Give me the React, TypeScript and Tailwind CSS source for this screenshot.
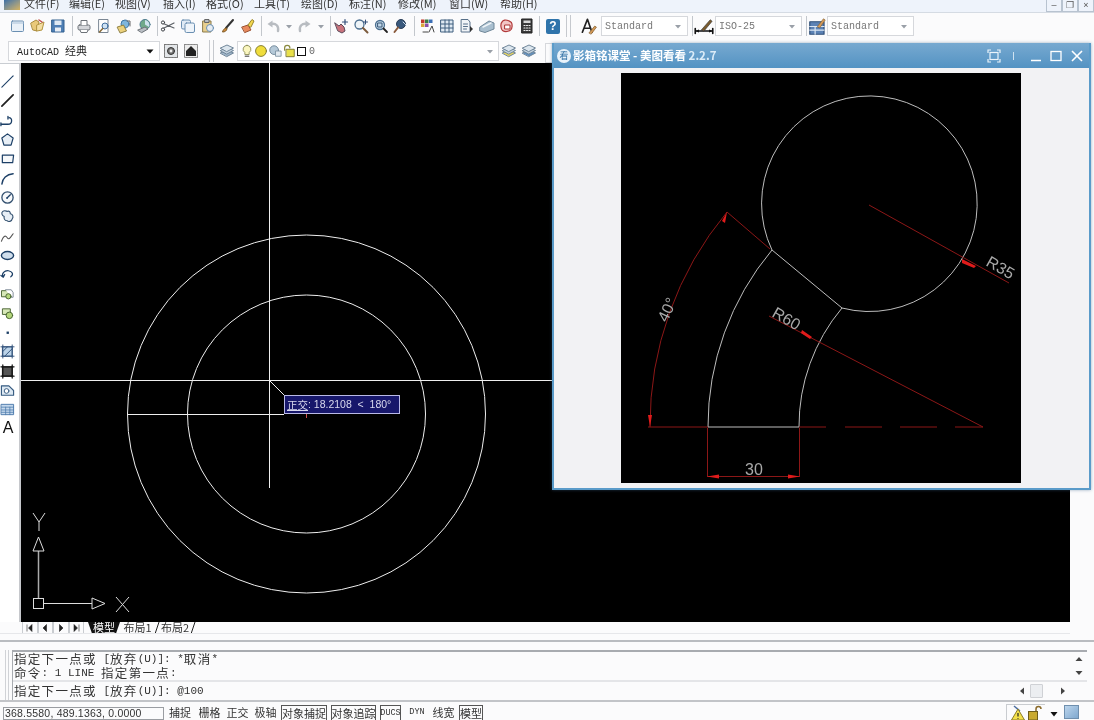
import type { ReactNode } from "react";

const cjk = "font-['Noto_Sans_CJK_SC','Noto_Sans',sans-serif]";
const mono = "font-['Liberation_Mono','Noto_Sans_CJK_SC',monospace]";

const menus = [
  { t: "文件(F)", w: 45 },
  { t: "编辑(E)", w: 46 },
  { t: "视图(V)", w: 48 },
  { t: "插入(I)", w: 43 },
  { t: "格式(O)", w: 48 },
  { t: "工具(T)", w: 47 },
  { t: "绘图(D)", w: 48 },
  { t: "标注(N)", w: 49 },
  { t: "修改(M)", w: 51 },
  { t: "窗口(W)", w: 51 },
  { t: "帮助(H)", w: 40 },
];

function Ic({ children, size = 16 }: { children: ReactNode; size?: number }) {
  return (
    <svg viewBox="0 0 16 16" width={size} height={size} fill="none" strokeLinecap="round" strokeLinejoin="round">
      {children}
    </svg>
  );
}

function Slot({ children, w = 20 }: { children?: ReactNode; w?: number }) {
  return <div className="flex h-full shrink-0 items-center justify-center" style={{ width: w }}>{children}</div>;
}

function Sep({ ml = 3 }: { ml?: number }) {
  return <div className="h-[20px] w-[1px] shrink-0 bg-[#c3c7cc]" style={{ marginLeft: ml }} />;
}

function Grip() {
  return <div className="h-[22px] w-[5px] shrink-0 border-x border-[#c6c9ce]" />;
}

function Drop() {
  return (
    <svg viewBox="0 0 8 8" width="8" height="8" className="shrink-0">
      <path d="M1 3h6L4 6.5z" fill="#9aa0a8" />
    </svg>
  );
}

function Combo({ w, children, dark }: { w: number; children: ReactNode; dark?: boolean }) {
  return (
    <div className="flex h-[20px] shrink-0 items-center justify-between border border-[#d6d8dc] bg-white pl-[3px] pr-[5px]" style={{ width: w }}>
      <div className={`${mono} flex items-center text-[10px] text-[#777]`}>{children}</div>
      {dark ? (
        <svg viewBox="0 0 8 8" width="8" height="8"><path d="M0.5 2.5h7L4 6.5z" fill="#111" /></svg>
      ) : (
        <Drop />
      )}
    </div>
  );
}

/* top toolbar drawings */
const New = () => <Ic><rect x="1.5" y="3" width="12" height="10.5" rx="1" fill="#eaf1f8" stroke="#6a8fb2" /><path d="M1.5 5h12" stroke="#a9c1d8" /></Ic>;
const Open = () => <Ic><path d="M1 5l5-3 3 2-2 9-4-1z" fill="#e9c97a" stroke="#a98a3c" /><path d="M7 7l7-3-2 8-5 1z" fill="#f3dda0" stroke="#b2933f" /><path d="M9 2l3 2" stroke="#c0504d" strokeWidth="1.5" /></Ic>;
const Save = () => <Ic><rect x="2" y="2" width="12" height="12" fill="#4f7fb5" stroke="#33608f" /><rect x="4.5" y="2.5" width="7" height="4.5" fill="#dfe9f3" /><rect x="5" y="9.5" width="6" height="4" fill="#e9eef4" /></Ic>;
const Print = () => <Ic><rect x="2" y="7" width="12" height="5" rx="1.5" fill="#d4d6da" stroke="#6d7278" /><path d="M5 7V2.5h6V7" fill="#fff" stroke="#6d7278" /><path d="M4 12l1 2.5h6l1-2.5" fill="#fff" stroke="#6d7278" /></Ic>;
const Preview = () => <Ic><path d="M3 1.5h9v13H3z" fill="#fff" stroke="#7b8794" /><circle cx="9" cy="8" r="3" fill="#cfe2f3" stroke="#3e6d9e" /><path d="M6.8 10.5L3.5 14" stroke="#8a6d3b" strokeWidth="1.6" /></Ic>;
const Publish = () => <Ic><circle cx="9" cy="6" r="4" fill="#7fb6dd" stroke="#3f75a4" /><path d="M1.5 9l6-2 3 6-6 2z" fill="#ecd17c" stroke="#8f7f3e" /><path d="M11 3h3v5" stroke="#666" /></Ic>;
const Plot = () => <Ic><circle cx="9" cy="6.5" r="5" fill="#6fa98a" stroke="#4c7a8f" /><path d="M9 2a5 5 0 0 1 4 7l-4-2.5z" fill="#cfe3ef" /><path d="M2 12l7-3 3 2-6 3.5z" fill="#b9bec4" stroke="#6c7278" /></Ic>;
const Cut = () => <Ic><path d="M2 5l12 5M2 11l12-6" stroke="#5c6066" strokeWidth="1.2" /><circle cx="3" cy="4.5" r="1.6" fill="#fff" stroke="#3c4046" /><circle cx="3" cy="11.5" r="1.6" fill="#fff" stroke="#3c4046" /></Ic>;
const Copy = () => <Ic><rect x="1.5" y="2" width="9" height="9" rx="1.5" fill="#dfeaf5" stroke="#6a8fb2" /><rect x="5" y="5" width="9.5" height="9.5" rx="1.5" fill="#eef4fa" stroke="#6a8fb2" /></Ic>;
const Paste = () => <Ic><path d="M3 3h8v11H3z" fill="#e8cf8e" stroke="#8a7a4a" /><rect x="5" y="1.5" width="4" height="3" fill="#b9bec4" stroke="#666" /><circle cx="10" cy="10" r="3.5" fill="#e7edf3" stroke="#6a8fb2" /></Ic>;
const Brush = () => <Ic><path d="M13 2L6 10" stroke="#333" strokeWidth="2" /><path d="M6 10c-2 .5-3 2-3.5 4 2.5 0 4-1 4.5-3z" fill="#d08a3a" stroke="#7d5a26" /></Ic>;
const Match = () => <Ic><path d="M2 9l6-2 3 5-6 2.5z" fill="#e98a5c" stroke="#9b5132" /><path d="M8 7l4-5.5 2 1.5-3 6z" fill="#f4d84f" stroke="#99852b" /></Ic>;
const Undo = () => <Ic><path d="M13 13c1-5-2-8-7-7" stroke="#b8bcc1" strokeWidth="2.4" /><path d="M7.5 2.5L2.5 6l5 3.5z" fill="#b8bcc1" /></Ic>;
const Redo = () => <Ic><path d="M3 13c-1-5 2-8 7-7" stroke="#b8bcc1" strokeWidth="2.4" /><path d="M8.5 2.5l5 3.5-5 3.5z" fill="#b8bcc1" /></Ic>;
const Pan = () => <Ic><path d="M2 5l4 3 2-2 3 3 1 4-3 2-4-2z" fill="#c9737c" stroke="#5b4a5a" /><path d="M12 1.5v5M9.5 4h5" stroke="#34507a" strokeWidth="1.2" /></Ic>;
const ZoomA = () => <Ic><circle cx="6.5" cy="6.5" r="4.5" fill="#eef4f8" stroke="#4c6f90" strokeWidth="1.3" /><path d="M10 10l4.5 4.5" stroke="#7b5a3c" strokeWidth="2" /><path d="M12.5 2v4M10.5 4h4" stroke="#34507a" /></Ic>;
const ZoomB = () => <Ic><circle cx="7" cy="7" r="4.5" fill="#c3d9ea" stroke="#4c6f90" strokeWidth="1.3" /><rect x="5" y="5" width="4" height="4" stroke="#3a5675" /><path d="M10.5 10.5l3.5 3.5" stroke="#222" strokeWidth="1.8" /></Ic>;
const ZoomC = () => <Ic><circle cx="8" cy="6" r="4.5" fill="#39597d" stroke="#2b3f59" /><path d="M5 9.5L1.5 14" stroke="#8a5a3c" strokeWidth="2" /><path d="M10 4l3 3" stroke="#cfe0ee" /></Ic>;
const Props = () => <Ic><rect x="2" y="1.5" width="3.5" height="3.5" fill="#c0392b" /><rect x="6" y="1.5" width="3.5" height="3.5" fill="#3a7d44" /><rect x="10" y="1.5" width="3.5" height="3.5" fill="#3c6fb5" /><rect x="2" y="5.5" width="3.5" height="3.5" fill="#d9a63c" /><rect x="6" y="5.5" width="3.5" height="3.5" fill="#8a4fa8" /><path d="M10 14l3-6 2 6M4 14h5" stroke="#444" /></Ic>;
const Grid = () => <Ic><rect x="2" y="2" width="12" height="12" fill="#dfe9f2" stroke="#3f5f7f" /><path d="M6 2v12M10 2v12M2 6h12M2 10h12" stroke="#3f5f7f" /></Ic>;
const Doc = () => <Ic><path d="M2.5 1.5H9l2 2.5v10H2.5z" fill="#f1f4f7" stroke="#576f88" /><path d="M4.5 6h4M4.5 8.5h4M4.5 11h3" stroke="#576f88" /><path d="M11 8l3 3-3 3z" fill="#333" /></Ic>;
const Sheet = () => <Ic><path d="M1 9l9-6 5 2v6l-9 3.5L1 13z" fill="#a9bfcf" stroke="#6f8798" /><path d="M4 9l8-4" stroke="#eef3f7" strokeWidth="1.5" /></Ic>;
const Cloud = () => <Ic><path d="M3 4c1-2 4-2.5 6-1.5s4 1 4 3.5 1 5-2 6.5-6 1-7.5 0S1 6 3 4z" fill="#f2c6c6" stroke="#b23a3a" strokeWidth="1.2" /><path d="M6 7h5v4H6z" fill="#fff" stroke="#a33" /></Ic>;
const Calc = () => <Ic><rect x="3" y="1" width="10" height="14" fill="#3b3b3b" stroke="#222" /><rect x="4.5" y="2.5" width="7" height="2.5" fill="#d8d8d8" /><path d="M5 7.5h1M7.5 7.5h1M10 7.5h1M5 10h1M7.5 10h1M10 10h1M5 12.5h1M7.5 12.5h1M10 12.5h1" stroke="#eee" strokeWidth="1.2" /></Ic>;
const Help = () => (
  <div className="flex h-[15px] w-[14px] items-center justify-center rounded-[2px] bg-[#2f74ab] text-[12px] font-bold leading-none text-white font-['Liberation_Sans',sans-serif]">?</div>
);
const TextStyle = () => <Ic size={18}><path d="M3 13.5L7.5 2l4 11.5M4.5 10h6" stroke="#222" strokeWidth="1.5" /><path d="M9 14l5-6 1.5 1-4.5 6z" fill="#d49a5a" stroke="#7d5a26" strokeWidth=".6" /></Ic>;
const DimStyle = () => <Ic size={20}><path d="M1 12h14M1 10v4M15 10v4" stroke="#111" strokeWidth="1.3" /><path d="M1 12l3-1.2v2.4zM15 12l-3-1.2v2.4z" fill="#111" /><path d="M6 11l7-8 1.5 1.2L8 12z" fill="#7a5a2c" stroke="#333" strokeWidth=".5" /></Ic>;
const TableStyle = () => <Ic size={19}><rect x="1.5" y="4" width="12" height="10.5" fill="#5c82b5" stroke="#2f4f78" /><path d="M1.5 8h12M1.5 11h12M6 8v6.5" stroke="#dce7f3" /><path d="M8 8l5-6.5 1.5 1L10 9z" fill="#d49a5a" stroke="#7d5a26" strokeWidth=".5" /></Ic>;

/* second toolbar drawings */
const Gear = () => <Ic><rect x="1.5" y="1.5" width="13" height="13" fill="#e3e6e9" stroke="#777" strokeDasharray="2 1" /><circle cx="8" cy="8" r="3.5" fill="#777" stroke="#333" /><circle cx="8" cy="8" r="1.4" fill="#eee" /></Ic>;
const Block = () => <Ic><rect x="1.5" y="1.5" width="13" height="13" fill="#ececec" stroke="#888" strokeDasharray="2 1" /><path d="M3 8l5-5 5 5v5H3z" fill="#222" /></Ic>;
const Layers = ({ tint = "#9db4c9" }: { tint?: string }) => <Ic><path d="M1.5 10L8 7l6.5 3L8 13.5z" fill={tint} stroke="#71879a" /><path d="M1.5 7.5L8 4.5l6.5 3L8 11z" fill="#c3d2df" stroke="#71879a" /><path d="M1.5 5L8 2l6.5 3L8 8.5z" fill="#dce6ee" stroke="#71879a" /></Ic>;
const Bulb = () => <Ic size={14}><path d="M8 1.5a4.5 4.5 0 0 0-2.5 8.2V12h5V9.7A4.5 4.5 0 0 0 8 1.5z" fill="#fbf7c0" stroke="#8a8a55" /><path d="M6 14h4" stroke="#777" strokeWidth="1.5" /></Ic>;
const Sun = () => <Ic size={14}><circle cx="8" cy="8" r="6.2" fill="#f0dd3c" stroke="#77722a" /></Ic>;
const Frozen = () => <Ic size={14}><circle cx="7" cy="7" r="5" fill="#b5c9d8" stroke="#6c8294" /><rect x="9" y="8" width="6" height="6" fill="#e2eaf0" stroke="#7f93a3" /></Ic>;
const Lock = () => <Ic size={14}><path d="M3 7V4.5a3 3 0 0 1 6 0" stroke="#8a8a40" strokeWidth="1.4" /><rect x="5" y="6" width="9" height="8.5" fill="#e9e04a" stroke="#77722a" /></Ic>;

/* left toolbar drawings */
const s = "#1c3f66";
const leftTools: ReactNode[] = [
  <path d="M2 14L14 2" stroke={s} strokeWidth="1.2" />,
  <path d="M2 14L14 2" stroke="#222" strokeWidth="1.8" />,
  <><path d="M1.5 12h7c5 0 5-7 1-7" stroke={s} strokeWidth="1.4" /><path d="M1 10.5v3M8.5 3.5v3" stroke={s} strokeWidth="1.4" /></>,
  <path d="M8 2l6 4.5-2.2 7.5H4.2L2 6.5z" fill="#e8eff6" stroke={s} strokeWidth="1.3" />,
  <path d="M2.5 4.5h12l-1 8h-11z" fill="#f7f9fb" stroke={s} strokeWidth="1.3" />,
  <path d="M2 14C2.5 8 7 3.5 14 3" stroke={s} strokeWidth="1.5" />,
  <><circle cx="8" cy="8" r="6" fill="#f7f9fb" stroke="#33506f" strokeWidth="1.4" /><path d="M8 8l3-3" stroke={s} strokeWidth="1.4" /><circle cx="7.5" cy="8.5" r="1" fill={s} /></>,
  <path d="M3 2.5c2-1.5 4 0 5 0 2-1 3 1 3 2.5 3 .5 3.5 4 2 5.5-.5 3-4 3.5-5.5 2-3 0-3.5-3-3-4.5C2 7 1 4 3 2.5z" fill="#e8eff6" stroke="#33506f" strokeWidth="1.2" />,
  <path d="M1.5 13c2-5 4-7 6-4s3 1 6.5-4" stroke="#555" strokeWidth="1.1" />,
  <ellipse cx="8" cy="8" rx="6.5" ry="4.2" fill="#cfdeec" stroke={s} strokeWidth="1.5" />,
  <path d="M3.5 10.5C1 7 5 3.5 9 4c4 .5 6 4 2.5 6.5M5 8l-1.5 3L1 9" stroke={s} strokeWidth="1.3" />,
  <><rect x="2" y="5" width="9" height="6.5" fill="#d7e8b8" stroke="#44602f" /><path d="M6 4h6l2 3v5h-2" fill="#fff" stroke="#7b8794" /><circle cx="9" cy="11" r="2.8" fill="#b5d77d" stroke="#44602f" /></>,
  <><rect x="3" y="3" width="8" height="6" fill="#d7e8b8" stroke="#44602f" /><circle cx="10" cy="10" r="3.5" fill="#b5d77d" stroke="#44602f" /></>,
  <rect x="7" y="7" width="2.5" height="2.5" fill={s} />,
  <><rect x="3" y="3" width="10" height="10" fill="#bcd3e8" stroke="#2f4f78" /><path d="M1 3h14M1 13h14M3 1v14M13 1v14M3 8l5-5M5 13l8-8" stroke="#2f4f78" /></>,
  <><rect x="3" y="3" width="10" height="10" fill="#555" stroke="#111" /><path d="M1 3h14M1 13h14M3 1v14M13 1v14" stroke="#111" strokeWidth="1.3" /></>,
  <><path d="M1.5 3h8l5 5v5h-13z" fill="#dce8f2" stroke="#355a80" strokeWidth="1.2" /><circle cx="7" cy="8.5" r="2.5" fill="#fff" stroke="#355a80" /></>,
  <><rect x="1.5" y="2.5" width="13" height="11" fill="#c5d8ec" stroke="#4b79ab" /><path d="M1.5 5.5h13M1.5 8.5h13M1.5 11h13M6 5.5v8M10.5 5.5v8" stroke="#4b79ab" strokeWidth=".8" /></>,
];

function CadDrawing() {
  return (
    <svg viewBox="21 63 1049 559" className="block h-full w-full" fill="none">
      <g stroke="#eeeeee" strokeWidth="1">
        <circle cx="306.5" cy="414" r="179" />
        <circle cx="306.5" cy="414" r="119" />
        <path d="M269.5 63V488M21 380.5H552M127 414.5H284M270 381L285 396" />
      </g>
      <path d="M306.5 412v6" stroke="#d05050" />
      {/* ucs icon */}
      <g stroke="#ddd" strokeWidth="1">
        <rect x="33.5" y="598.5" width="10" height="10" />
        <path d="M38.5 598V551" stroke="#aaa" strokeWidth="1.5" />
        <path d="M43 603.5H92" />
        <path d="M38.5 537l-5.5 14h11zM92 598v11l13-5.5z" />
        <path d="M33 513l6 9 6-9M39 522v9M116 597l13 15M129 597l-13 15" />
      </g>
    </svg>
  );
}

function ReferenceDrawing() {
  const red = "#8c1717";
  const text = "font-['Liberation_Sans',sans-serif]";
  return (
    <svg viewBox="621 73 400 410" className="block h-[410px] w-[400px]" fill="none">
      <g stroke="#bdbdbd" strokeWidth="1">
        <path d="M772 250A107.8 107.8 0 1 1 842 308" />
        <path d="M708 427A275 275 0 0 1 772 250L842 308A184 184 0 0 0 799 427Z" />
      </g>
      <g stroke={red} strokeWidth="1">
        <path d="M650 427A333 333 0 0 1 727 212L770 249" />
        <path d="M869 205L1009 283M769 316L983 427" />
        <path d="M648 427H708M799 427H826M845 427H882M900 427H937M955 427H983" />
        <path d="M707.5 428V477M799.5 428V477M707 476.5H800" />
      </g>
      <g fill="#e01b1b">
        <path d="M650 427l-2-12h4zM727 212l-5 9 3 2zM962 259l14 7-2 2-12-5zM810 339l-9-6 1-3 10 7zM707 476.5l12-2v4zM800 476.5l-12-2v4z" />
      </g>
      <g fill="#a8a8a8" className={text} fontSize="16">
        <text x="745" y="475">30</text>
        <text x="0" y="0" transform="translate(985 265) rotate(30)">R35</text>
        <text x="0" y="0" transform="translate(771 316) rotate(30)">R60</text>
        <text x="0" y="0" transform="translate(667 323) rotate(-65)">40°</text>
      </g>
    </svg>
  );
}

function ViewerWindow() {
  return (
    <div className="absolute left-[552px] top-[43px] flex h-[447px] w-[539px] flex-col border-x-2 border-b-2 border-[#5a9bc9] bg-[#f2f2f4] shadow-[0_0_3px_rgba(60,100,140,0.5)]">
      <div className="flex h-[25px] shrink-0 items-center bg-gradient-to-b from-[#77a9d0] to-[#5393c3] pl-[3px] pr-[5px]">
        <div className="flex h-[14px] w-[14px] items-center justify-center rounded-full bg-[#e9f3fb] text-[9px] leading-none text-[#2c6ea3]">
          <span className={cjk}>看</span>
        </div>
        <span className={`${cjk} ml-[2px] text-[11.5px] font-bold text-white`}>影箱铭课堂 - 美图看看 <span className="text-[#dcecf8]">2.2.7</span></span>
        <div className="ml-auto flex items-center">
          <svg viewBox="0 0 14 14" width="14" height="14" fill="none" stroke="#eaf3fa" strokeWidth="1.2">
            <path d="M1 4V1h3M10 1h3v3M13 10v3h-3M4 13H1v-3" />
            <rect x="3" y="3.5" width="8" height="7" />
          </svg>
          <div className="ml-[12px] h-[8px] w-[1px] bg-[#cfe2f0]" />
          <svg viewBox="0 0 14 14" width="14" height="14" fill="none" stroke="#fff" strokeWidth="1.5" className="ml-[15px]"><path d="M2 11.5h10" /></svg>
          <svg viewBox="0 0 14 14" width="14" height="14" fill="none" stroke="#fff" strokeWidth="1.3" className="ml-[6px]"><rect x="2" y="2.5" width="10" height="9" /></svg>
          <svg viewBox="0 0 14 14" width="14" height="14" fill="none" stroke="#fff" strokeWidth="1.6" className="ml-[7px]"><path d="M2 2l10 10M12 2L2 12" /></svg>
        </div>
      </div>
      <div className="flex pl-[67px] pt-[5px]">
        <div className="bg-black">
          <ReferenceDrawing />
        </div>
      </div>
    </div>
  );
}

function Cmd({ children }: { children: ReactNode }) {
  return <span className={`${cjk} text-[12.5px] tracking-[1.3px]`}>{children}</span>;
}

function Lat({ children }: { children: ReactNode }) {
  return <span className={`${mono} text-[11px]`}>{children}</span>;
}

function Slash() {
  return (
    <svg viewBox="0 0 6 12" width="6" height="12" fill="none" className="shrink-0">
      <path d="M5 0L1 12" stroke="#222" />
    </svg>
  );
}

const statusBtns = [
  { t: "捕捉", w: 22, ml: 5 },
  { t: "栅格", w: 23, ml: 7 },
  { t: "正交", w: 23, ml: 5 },
  { t: "极轴", w: 23, ml: 5 },
  { t: "对象捕捉", w: 46, ml: 4, on: true },
  { t: "对象追踪", w: 45, ml: 4, on: true },
  { t: "DUCS", w: 21, ml: 4, on: true, lat: true },
  { t: "DYN", w: 20, ml: 6, lat: true },
  { t: "线宽", w: 23, ml: 5 },
  { t: "模型", w: 24, ml: 4, on: true },
];

export default function App() {
  return (
    <div className="relative flex h-[720px] w-[1094px] flex-col overflow-hidden bg-[#fbfbfc] text-[#222] blur-[0.3px] font-['Liberation_Sans',sans-serif]">
      {/* menu bar */}
      <div className="flex h-[13px] shrink-0 overflow-hidden border-b border-[#d5dbe3] bg-[#eef3fb]">
        <div className="ml-[4px] h-[10px] w-[16px] shrink-0 bg-gradient-to-br from-[#3c6fa5] to-[#d8b45a]" />
        <div className={`${cjk} -mt-[5px] ml-[4px] flex text-[11px] leading-[16px] text-[#333]`}>
          {menus.map((m) => <span key={m.t} className="whitespace-nowrap" style={{ width: m.w }}>{m.t}</span>)}
        </div>
        <div className="ml-auto flex h-[12px] items-start">
          {["–", "❐", "×"].map((c) => (
            <div key={c} className="flex h-[12px] w-[16px] items-center justify-center border-x border-b border-[#b8c3d0] text-[9px] leading-none text-[#555]">{c}</div>
          ))}
        </div>
      </div>

      {/* standard + styles toolbar */}
      <div className="flex h-[26px] shrink-0 items-center pl-[8px]">
        <Slot><New /></Slot><Slot><Open /></Slot><Slot><Save /></Slot>
        <Sep ml={4} />
        <div className="w-[1px]" />
        <Slot><Print /></Slot><Slot><Preview /></Slot><Slot><Publish /></Slot><Slot><Plot /></Slot>
        <Sep />
        <Slot><Cut /></Slot><Slot><Copy /></Slot><Slot><Paste /></Slot><Slot><Brush /></Slot><Slot><Match /></Slot>
        <Sep />
        <div className="w-[1px]" />
        <Slot><Undo /></Slot><Slot w={12}><Drop /></Slot><Slot><Redo /></Slot><Slot w={12}><Drop /></Slot>
        <Sep />
        <Slot><Pan /></Slot><Slot><ZoomA /></Slot><Slot><ZoomB /></Slot><Slot><ZoomC /></Slot>
        <Sep ml={3} />
        <div className="w-[2px]" />
        <Slot><Props /></Slot><Slot><Grid /></Slot><Slot><Doc /></Slot><Slot><Sheet /></Slot><Slot><Cloud /></Slot><Slot><Calc /></Slot>
        <Sep ml={2} />
        <div className="w-[3px]" />
        <Slot><Help /></Slot>
        <div className="ml-[3px]"><Grip /></div>
        <div className="w-[7px]" />
        <Slot><TextStyle /></Slot>
        <div className="w-[3px]" />
        <Combo w={87}>Standard</Combo>
        <Sep ml={4} />
        <Slot w={22}><DimStyle /></Slot>
        <Combo w={87}>ISO-25</Combo>
        <Sep ml={4} />
        <Slot><TableStyle /></Slot>
        <Combo w={87}>Standard</Combo>
      </div>

      {/* workspace + layers toolbar */}
      <div className="flex h-[24px] shrink-0 items-center pl-[8px]">
        <Combo w={152} dark><span className="pl-[5px] text-[#222]">AutoCAD <span className={`${cjk} text-[11px]`}>经典</span></span></Combo>
        <div className="w-[1px]" />
        <Slot><Gear /></Slot><Slot><Block /></Slot>
        <div className="ml-[8px]"><Grip /></div>
        <div className="w-[3px]" />
        <Slot><Layers /></Slot>
        <div className="flex h-[20px] w-[262px] shrink-0 items-center border border-[#d6d8dc] bg-white pl-[2px] pr-[4px]">
          <Bulb /><Sun /><Frozen /><Lock />
          <div className="ml-[1px] h-[9px] w-[9px] border border-[#111]" />
          <span className={`${mono} ml-[3px] text-[10px] text-[#666]`}>0</span>
          <div className="ml-auto"><Drop /></div>
        </div>
        <Slot><Layers tint="#e6d35a" /></Slot><Slot><Layers tint="#5f8fc0" /></Slot>
        <div className="ml-[6px] flex h-full items-end gap-[6px]">
          {[140, 139, 108, 108].map((w, i) => <div key={i} className="h-[20px] border border-[#d6d8dc]" style={{ width: w }} />)}
        </div>
      </div>

      {/* drawing area */}
      <div className="flex h-[559px] shrink-0">
        <div className="flex w-[19px] shrink-0 flex-col items-start border-t border-[#c9cdd2] bg-white pt-[8px]">
          {leftTools.map((t, i) => <div key={i} className="flex h-[19.3px] shrink-0 items-center justify-center"><Ic size={15}>{t}</Ic></div>)}
          <div className="flex h-[17px] w-[16px] items-center justify-center text-[16px] leading-none text-[#111]">A</div>
        </div>
        <div className="w-[2px] shrink-0 bg-[#c6c8cc]" />
        <div className="relative w-[1049px] shrink-0 bg-black">
          <CadDrawing />
          <div className="absolute left-[263px] top-[332px] flex h-[19px] w-[116px] items-center whitespace-nowrap border border-[#b9b9e6] bg-[#17176b] pl-[2px] text-[10.5px] text-[#d9d9ee]">
            <span className={`${cjk} underline`}>正交</span><span>: 18.2108 &nbsp;&lt;&nbsp; 180°</span>
          </div>
        </div>
      </div>

      {/* layout tabs */}
      <div className="flex h-[12px] w-[1070px] shrink-0 items-center overflow-hidden border-b border-[#e6e7ea] pl-[22px]">
        {["M2 1.5v7M7 1.5L3.5 5 7 8.5z", "M6.5 1.5L3 5l3.5 3.5z", "M3.5 1.5L7 5 3.5 8.5z", "M8 1.5v7M3 1.5L6.5 5 3 8.5z"].map((d, i) => (
          <div key={i} className="flex h-full w-[15.5px] items-center justify-center border-x border-[#c9ccd0]">
            <svg viewBox="0 0 10 10" width="10" height="10"><path d={d} fill="#222" stroke="#222" strokeWidth=".6" /></svg>
          </div>
        ))}
        <div className={`${cjk} ml-[4px] flex h-full w-[32px] items-center justify-center bg-[#111] text-[11px] leading-none text-white [clip-path:polygon(0_0,100%_0,88%_100%,12%_100%)]`}>模型</div>
        <div className={`${cjk} ml-[1px] flex h-full w-[33px] items-center justify-center text-[11px] leading-none text-[#333]`}>布局1</div>
        <Slash />
        <div className={`${cjk} flex h-full w-[30px] items-center justify-center text-[11px] leading-none text-[#333]`}>布局2</div>
        <Slash />
      </div>

      <div className="h-[6px] shrink-0" />
      <div className="h-[2px] shrink-0 bg-[#b9bcc0]" />
      <div className="h-[8px] shrink-0" />

      {/* command window */}
      <div className="flex h-[50px] shrink-0 pl-[5px]">
        <div className="mr-[3px] w-[4px] shrink-0 border-x border-[#d0d2d6]" />
        <div className="flex w-[1075px] shrink-0 flex-col border-l border-t-2 border-[#a8abb0]">
          <div className="flex h-[30px] shrink-0 border-b-2 border-[#e4e5e8]">
            <div className="flex-1 overflow-hidden pl-[1px] text-[#333]">
              <div className="flex h-[14px] items-center whitespace-nowrap leading-none"><Cmd>指定下一点或</Cmd><Lat>&nbsp;[</Lat><Cmd>放弃</Cmd><Lat>(U)]:&nbsp;*</Lat><Cmd>取消</Cmd><Lat>*</Lat></div>
              <div className="flex h-[14px] items-center whitespace-nowrap leading-none"><Cmd>命令</Cmd><Lat>:&nbsp;1&nbsp;LINE&nbsp;</Lat><Cmd>指定第一点</Cmd><Lat>:</Lat></div>
            </div>
            <div className="flex w-[16px] flex-col items-center justify-between py-[3px]">
              <svg viewBox="0 0 8 8" width="8" height="8"><path d="M0.5 6h7L4 2z" fill="#444" /></svg>
              <svg viewBox="0 0 8 8" width="8" height="8"><path d="M0.5 2h7L4 6z" fill="#444" /></svg>
            </div>
          </div>
          <div className="flex flex-1 items-center pl-[1px] text-[#333]">
            <div className="flex items-center whitespace-nowrap leading-none"><Cmd>指定下一点或</Cmd><Lat>&nbsp;[</Lat><Cmd>放弃</Cmd><Lat>(U)]:&nbsp;@100</Lat></div>
            <div className="ml-auto mr-[21px] flex w-[47px] items-center">
              <svg viewBox="0 0 6 8" width="6" height="8" className="shrink-0"><path d="M5 0.5v7L1 4z" fill="#444" /></svg>
              <div className="ml-[5px] h-[14px] w-[13px] rounded-[1px] border border-[#cfd1d5] bg-[#eceef1]" />
              <svg viewBox="0 0 6 8" width="6" height="8" className="ml-auto shrink-0"><path d="M1 0.5v7L5 4z" fill="#444" /></svg>
            </div>
          </div>
        </div>
      </div>

      <div className="h-[2px] shrink-0 bg-[#c2c4c8]" />

      {/* status bar */}
      <div className="flex min-h-0 flex-1 items-end pl-[3px]">
        <div className="flex h-[13px] w-[161px] shrink-0 items-center border border-[#9a9da2] pl-[1px] text-[10.5px] tracking-[0.2px] text-[#333]">
          368.5580, 489.1363, 0.0000
        </div>
        {statusBtns.map((b) => (
          <div
            key={b.t}
            className={`flex h-[15px] shrink-0 items-center justify-center whitespace-nowrap text-[#333] ${b.lat ? mono + " text-[8.5px]" : cjk + " text-[11px]"} ${b.on ? "border-x border-t border-[#555]" : ""}`}
            style={{ width: b.w, marginLeft: b.ml }}
          >
            {b.t}
          </div>
        ))}
        <div className="ml-auto flex h-[16px] items-center">
          <div className="flex h-full w-[39px] items-center gap-[1px] border-l border-t border-[#c9ccd0] pl-[3px]">
            <svg viewBox="0 0 16 16" width="16" height="16" fill="none">
              <path d="M4 1l6 5" stroke="#4f6fa0" strokeWidth="1.5" />
              <path d="M8 4l6.5 11h-13z" fill="#f3e04a" stroke="#8a7c2a" />
              <path d="M8 8v3.5M8 13v.8" stroke="#222" strokeWidth="1.2" />
            </svg>
            <svg viewBox="0 0 16 16" width="16" height="16" fill="none">
              <path d="M9 6V4a2.5 2.5 0 0 1 5 0" stroke="#8a6a2a" strokeWidth="1.5" />
              <rect x="1.5" y="6.5" width="9" height="8.5" fill="#c9a92f" stroke="#6d5c1c" />
            </svg>
          </div>
          <svg viewBox="0 0 8 8" width="8" height="8" className="ml-[5px] mt-[4px]"><path d="M0.5 2h7L4 6.5z" fill="#111" /></svg>
          <div className="ml-[6px] mr-[15px] h-[14px] w-[15px] border border-[#6f8fae] bg-gradient-to-br from-[#bcd5ec] to-[#7fa8cf]" />
        </div>
      </div>

      <ViewerWindow />
    </div>
  );
}
